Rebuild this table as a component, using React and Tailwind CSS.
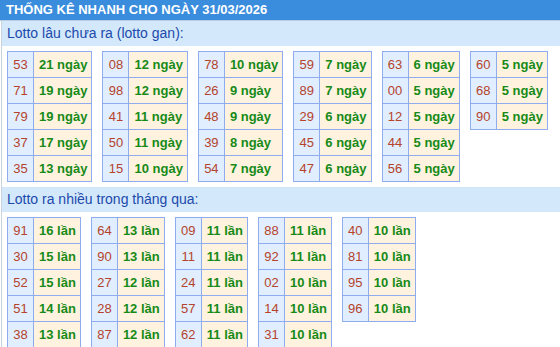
import React from "react";

const ganTables = [
  [["53", 21], ["71", 19], ["79", 19], ["37", 17], ["35", 13]],
  [["08", 12], ["98", 12], ["41", 11], ["50", 11], ["15", 10]],
  [["78", 10], ["26", 9], ["48", 9], ["39", 8], ["54", 7]],
  [["59", 7], ["89", 7], ["29", 6], ["45", 6], ["47", 6]],
  [["63", 6], ["00", 5], ["12", 5], ["44", 5], ["56", 5]],
  [["60", 5], ["68", 5], ["90", 5]],
];

const nhieuTables = [
  [["91", 16], ["30", 15], ["52", 15], ["51", 14], ["38", 13]],
  [["64", 13], ["90", 13], ["27", 12], ["28", 12], ["87", 12]],
  [["09", 11], ["11", 11], ["24", 11], ["57", 11], ["62", 11]],
  [["88", 11], ["92", 11], ["02", 10], ["14", 10], ["31", 10]],
  [["40", 10], ["81", 10], ["95", 10], ["96", 10]],
];

const StatTable = ({ rows, unit }) => (
  <div className="border-l border-t border-[#8eacef] self-start">
    {rows.map(([num, count]) => (
      <div key={num} className="flex h-[26px]">
        <div className="w-[26px] flex items-center justify-center border-r border-b border-[#8eacef] bg-[#e0eeff] text-[#b5432b] text-[13px]">
          {num}
        </div>
        <div className="flex-1 flex items-center pl-[5px] pr-[4px] border-r border-b border-[#8eacef] bg-[#fff3e0] text-[#178a17] text-[13px] font-bold whitespace-nowrap">
          {count} {unit}
        </div>
      </div>
    ))}
  </div>
);

const SectionTitle = ({ children }) => (
  <div className="h-[25px] flex items-center pl-[5px] bg-[#d4e8fb] text-[#1b4aab] text-[14px]">
    {children}
  </div>
);

export default function App() {
  return (
    <div
      className="w-[560px] h-[347px] overflow-hidden bg-white"
      style={{ fontFamily: '"Liberation Sans", Arial, sans-serif' }}
    >
      <div className="h-[20px] flex items-center pl-[6px] bg-[#3a8cdd] text-white text-[13px] font-bold border-b border-[#b9cde2] box-content">
        THỐNG KÊ NHANH CHO NGÀY 31/03/2026
      </div>
      <div className="ml-px border-l border-[#c8d2dd]">
        <SectionTitle>Lotto lâu chưa ra (lotto gan):</SectionTitle>
        <div className="flex gap-[10px] pl-[5px] pt-[5px] pb-[5px]">
          {ganTables.map((rows, i) => (
            <StatTable key={i} rows={rows} unit="ngày" />
          ))}
        </div>
        <SectionTitle>Lotto ra nhiều trong tháng qua:</SectionTitle>
        <div className="flex gap-[10px] pl-[5px] pt-[5px]">
          {nhieuTables.map((rows, i) => (
            <StatTable key={i} rows={rows} unit="lần" />
          ))}
        </div>
      </div>
    </div>
  );
}
